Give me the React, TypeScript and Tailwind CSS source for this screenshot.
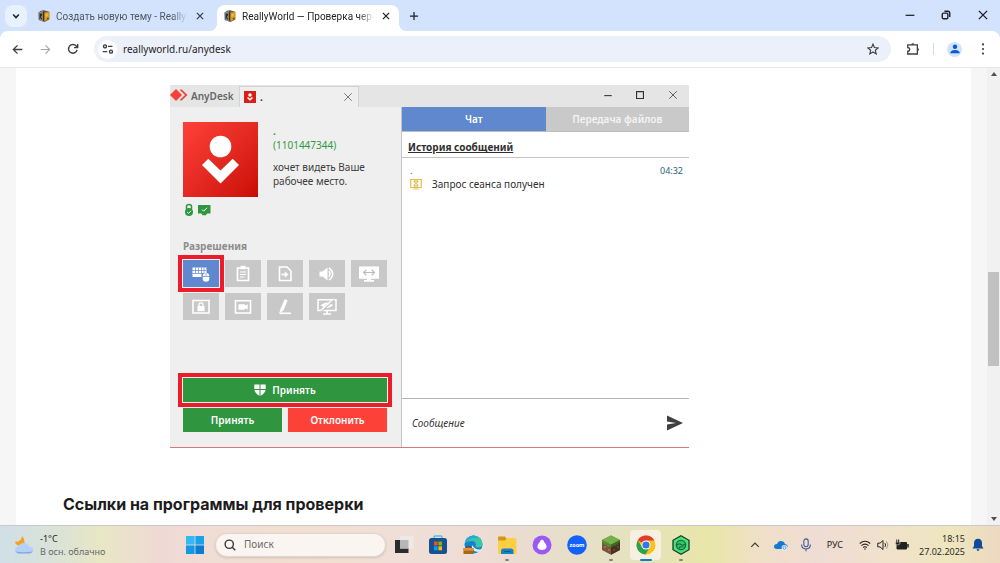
import React from "react";
import type { ReactNode, SVGProps } from "react";

type IconProps = SVGProps<SVGSVGElement>;

function Line({ children, ...rest }: IconProps) {
  return (
    <svg viewBox="0 0 16 16" fill="none" stroke="currentColor" strokeWidth="1.5" aria-hidden="true" {...rest}>
      {children}
    </svg>
  );
}

function Favicon() {
  return (
    <svg viewBox="0 0 12 12" className="size-3 shrink-0" aria-hidden="true">
      <path d="M.5 2.500 3 .8 6 .3l5.300 1.500V9.500L6.500 12 .8 10Z" fill="#5a5855" />
      <path d="M.5 2.800 5 1v10.500L.8 10Z" fill="#99958d" />
      <path d="M1.600 3.500H4v2l-1 1 1.200 3H3L2 7.500v2h-.6Z" fill="#2d2b28" />
      <path d="M4.800 1.400 6.400 2v9l-1.600-.4Z" fill="#34312c" />
      <path d="m6.400 2.600 4.800-.6v7l-4.800 2.200Z" fill="#e59a12" />
      <path d="m7.600 4 2-.4v2.200L7.600 7.200Z" fill="#f8bd3c" />
      <path d="m8.800 8.200 1.800-1v1.800l-1.800.8Z" fill="#6b4a10" />
    </svg>
  );
}

function CloseGlyph({ className }: { className: string }) {
  return (
    <Line className={className}>
      <path d="m3 3 10 10M13 3 3 13" />
    </Line>
  );
}

function TabStrip() {
  return (
    <header className="flex h-[31px] shrink-0 items-end bg-[#d3e3fd] text-[#1f1f1f]">
      <button aria-label="Поиск вкладок" className="mb-1 ml-[5px] flex size-[22px] items-center justify-center rounded-lg bg-[#e9f1fe]">
        <Line className="size-2.5" strokeWidth="2.4"><path d="m3.500 5.500 4.500 5 4.500-5" /></Line>
      </button>
      <div className="ml-[11px] flex h-[26px] w-[166px] items-center pb-1 font-['Roboto',sans-serif] text-[10px] text-[#50575f]">
        <Favicon />
        <a href="#new" className="ml-1.5 w-[132px] whitespace-nowrap [mask-image:linear-gradient(90deg,#000_88%,transparent)]">
          Создать новую тему - ReallyW
        </a>
        <button aria-label="Закрыть вкладку" className="ml-[7px] shrink-0 text-[#3c4043]"><CloseGlyph className="size-2.5 stroke-2" /></button>
      </div>
      <div className="relative ml-[13px] flex h-[26px] w-[182px] items-center rounded-t-lg bg-white pb-1 pl-[7px] font-['Roboto',sans-serif] text-[10px] before:absolute before:bottom-0 before:-left-2 before:size-2 before:bg-[radial-gradient(circle_at_0_0,transparent_8px,#fff_8px)] after:absolute after:-right-2 after:bottom-0 after:size-2 after:bg-[radial-gradient(circle_at_100%_0,transparent_8px,#fff_8px)]">
        <Favicon />
        <a href="#check" className="ml-1.5 w-[132px] whitespace-nowrap [mask-image:linear-gradient(90deg,#000_88%,transparent)]">
          ReallyWorld — Проверка чере
        </a>
        <button aria-label="Закрыть вкладку" className="ml-[7px] shrink-0"><CloseGlyph className="size-2.5 stroke-2" /></button>
      </div>
      <button aria-label="Новая вкладка" className="mb-2.5 ml-2.5">
        <Line className="size-2.5" strokeWidth="2"><path d="M8 1.500v13M1.500 8h13" /></Line>
      </button>
      <div className="mr-[11px] mb-2.5 ml-auto flex items-center gap-[26px]">
        <button aria-label="Свернуть"><Line className="size-2.5"><path d="M1 8.500h14" strokeWidth="2" /></Line></button>
        <button aria-label="Восстановить">
          <Line className="size-2.5" strokeWidth="2.200"><rect x="2" y="5" width="9" height="9" rx="2" /><path d="M5.500 2H11q3 0 3 3v6" /></Line>
        </button>
        <button aria-label="Закрыть"><Line className="size-3" strokeWidth="1.800"><path d="m2.500 2.500 11 11M13.500 2.500l-11 11" /></Line></button>
      </div>
    </header>
  );
}

function AddressBar() {
  return (
    <div className="shrink-0 bg-[#d3e3fd]">
      <nav className="flex h-[37px] items-center rounded-t-lg border-b border-[#e6e6e8] bg-white pr-[11px] pl-3 text-[#3c4043]">
        <button aria-label="Назад"><Line className="size-[11px]"><path d="M15 8H2M8 2 2 8l6 6" strokeWidth="1.900" /></Line></button>
        <button aria-label="Вперёд" className="ml-[17px] text-[#a5a7aa]"><Line className="size-[11px]"><path d="M1 8h13M8 2l6 6-6 6" strokeWidth="1.700" /></Line></button>
        <button aria-label="Обновить" className="ml-4">
          <Line className="size-3" strokeWidth="1.900"><path d="M13.500 9.200A5.800 5.800 0 1 1 12.300 4L14 5.700" /><path d="M14.200 1.400v4.800H9.400" /></Line>
        </button>
        <div className="ml-[15px] flex h-[26px] flex-1 items-center rounded-full bg-[#ebf0fa] pr-3 pl-1">
          <button aria-label="Сведения о сайте" className="flex size-[19px] items-center justify-center rounded-full bg-white">
            <Line className="size-3" strokeWidth="1.800"><circle cx="4" cy="4.500" r="2" /><path d="M8 4.500h6M1 11.500h6" /><circle cx="12" cy="11.500" r="2" /></Line>
          </button>
          <input aria-label="Адресная строка" defaultValue="reallyworld.ru/anydesk" className="ml-1.5 min-w-0 flex-1 bg-transparent text-[10px] text-[#1f2328] outline-none" />
          <button aria-label="Добавить в закладки">
            <Line className="size-3" strokeWidth="1.500"><path d="m8 1.500 1.900 4.600 5 .4-3.800 3.200 1.200 4.800L8 11.900l-4.300 2.600 1.200-4.800L1.100 6.500l5-.4Z" /></Line>
          </button>
        </div>
        <button aria-label="Расширения" className="ml-[15px]">
          <Line className="size-3.5" strokeWidth="1.500"><path d="M2 3.200h11v10.500H2V10.500q2.200 0 2.200-2T2 6.500Z" /><path d="M6 3a1.700 1.700 0 0 1 3.400 0ZM13.200 7a1.600 1.600 0 0 1 0 3.200Z" fill="currentColor" stroke="none" /></Line>
        </button>
        <span className="ml-[13px] h-3 w-px bg-[#c9dcfb]" />
        <button aria-label="Профиль" className="ml-[13px] flex size-[15px] items-center justify-center rounded-full bg-[#d3e3fd]">
          <svg viewBox="0 0 10 10" className="size-2.5 fill-[#0b57d0]" aria-hidden="true"><circle cx="5" cy="2.800" r="2.200" /><path d="M.3 9.300V8.200Q1.500 6 5 6t4.700 2.200v1.100Z" /></svg>
        </button>
        <button aria-label="Меню" className="ml-[15px]">
          <svg viewBox="0 0 12 12" className="size-3 fill-current" aria-hidden="true"><circle cx="6" cy="1.400" r="1.100" /><circle cx="6" cy="6" r="1.100" /><circle cx="6" cy="10.600" r="1.100" /></svg>
        </button>
      </nav>
    </div>
  );
}

function PersonMark({ className }: { className: string }) {
  return (
    <svg viewBox="0 0 75 75" className={className} aria-hidden="true">
      <circle cx="37.500" cy="24.500" r="10.800" fill="#fff" />
      <path d="m19 43 6.300-6.200L37.500 48.500l12.200-11.700L56 43 37.500 61.500Z" fill="#fff" />
    </svg>
  );
}

const permissions: { label: string; active?: boolean; icon: ReactNode }[] = [
  {
    label: "Клавиатура и мышь",
    active: true,
    icon: (
      <>
        <path d="M.5 2.500h14v5.500H9.500v4H.5Z" fill="#fff" />
        <path d="M.5 5.500h14M.5 8.500h9M3.500 2.500v6M6.500 2.500v6M9.500 2.500v6M12 2.500v5.500" stroke="#6088cf" strokeWidth=".7" />
        <path d="M10.700 11.700h6.600v2q0 3-3.300 3t-3.300-3ZM10.700 11q.2-2.800 3-3V11Zm3.600 0V8q2.800.2 3 3Z" fill="#fff" />
      </>
    ),
  },
  {
    label: "Буфер обмена",
    icon: <><path d="M3.500 3h11v12.500h-11Z" strokeWidth="1.700" /><path d="M6.500.8h5v3.500h-5Z" fill="#fff" stroke="none" /><path d="M6 7h6M6 9.500h6M6 12h4.500" strokeWidth="1.200" /></>,
  },
  {
    label: "Передача файлов",
    icon: <><path d="M3.500 2h7.500l4 4v9.500h-11.500Z" strokeWidth="1.600" /><path d="M5.500 9.500h4.500" strokeWidth="1.800" /><path d="m8.800 6.300 3.700 3.200-3.700 3.200Z" fill="#fff" stroke="none" /></>,
  },
  {
    label: "Звук",
    icon: <><path d="M1.500 6.500h3L9.500 2.500v13l-5-4h-3Z" fill="#fff" stroke="none" /><path d="M11 6.200q1.900 2.800 0 5.600" strokeWidth="1.500" /><path d="M11 2.800q7.500 6.200 0 12.400" strokeWidth="1.500" /></>,
  },
  {
    label: "Размер экрана",
    icon: <><path d="M-1 1.500h20v12.200h-8v1.300h3v1.700H4V15h3v-1.300h-8Z" fill="#fff" stroke="none" /><path d="M3.800 7.500h10.400M6.300 4.800 3.500 7.500l2.800 2.700M11.700 4.800l2.800 2.700-2.800 2.700" stroke="#bdbdbd" strokeWidth="1.200" /></>,
  },
  {
    label: "Блокировка",
    icon: <><path d="M1 2.500h16v12.500H1Z" strokeWidth="1.600" /><path d="M5.500 8h7v5.200h-7Z" fill="#fff" stroke="none" /><path d="M7 8V6.600q0-1.800 2-1.800t2 1.800V8" strokeWidth="1.300" /></>,
  },
  {
    label: "Запись",
    icon: <><path d="M1.500 2.800h15v12.200h-15Z" strokeWidth="1.600" /><path d="M4.500 6.200h6.300v1.600l2.900-1.600v5.600l-2.900-1.600v1.600H4.500Z" fill="#fff" stroke="none" /></>,
  },
  {
    label: "Рисование",
    icon: <><path d="M8.600 1.300 11.700 2.300 7.500 12.500 3.300 15.300l1.200-4.500Z" fill="#fff" stroke="none" /><path d="M3.500 15.300h11.500" strokeWidth="1.600" /></>,
  },
  {
    label: "Приватный режим",
    icon: <><path d="M0 1.800h18v10.800H0Z" strokeWidth="1.500" /><path d="M5 16h8M9 13v3" strokeWidth="1.700" /><path d="M2.500 7.300Q9 1.500 15.500 7.300 9 12.800 2.500 7.300Z" fill="#fff" stroke="none" /><circle cx="9" cy="7.300" r="1.600" fill="#c8c8c8" stroke="none" /><path d="m3 13.500 13-12" stroke="#c8c8c8" strokeWidth="2" /><path d="m2.500 12.800 13-12" strokeWidth="1.300" /></>,
  },
];

function SessionPanel() {
  return (
    <section className="flex w-[232px] shrink-0 flex-col border-r border-[#c4c4c4] bg-[#efefef] pt-[15px] pr-3.5 pb-[15px] pl-[13px]">
      <div className="flex gap-[15px]">
        <PersonMark className="size-[75px] shrink-0 bg-linear-to-br from-[#ff4038] to-[#c90a03]" />
        <div className="pt-0.5 text-[10px] leading-[14px] text-[#3c3c3c]">
          <p className="text-[#2f9a42]"><b>.</b><br />(1101447344)</p>
          <p className="mt-2 whitespace-nowrap">хочет видеть Ваше<br />рабочее место.</p>
        </div>
      </div>
      <div className="mt-1.5 flex gap-[3px]">
        <svg viewBox="0 0 12 14" className="h-3.5 w-3" aria-hidden="true">
          <path d="M3.500 6V3.500q0-2 2.500-2t2.500 2V6" fill="none" stroke="#2f963f" strokeWidth="1.500" /><circle cx="6" cy="9" r="4" fill="#2f963f" /><path d="m4.200 9 1.400 1.400L8 7.800" fill="none" stroke="#fff" />
        </svg>
        <svg viewBox="0 0 14 14" className="size-3.5" aria-hidden="true">
          <path d="M0 2h12.500v8.500H9l-1 1.700H4.500l-1-1.700H0Z" fill="#2f963f" /><path d="m4 6.500 1.700 1.700L9 4.800" fill="none" stroke="#fff" />
        </svg>
      </div>
      <h2 className="mt-[22px] text-[10px] leading-[15px] font-bold text-[#8c8c8c]">Разрешения</h2>
      <div className="mt-1.5 flex flex-wrap gap-1.5">
        {permissions.map((p) => (
          <button
            key={p.label}
            aria-label={p.label}
            className={
              p.active
                ? "relative flex h-[27px] w-9 items-center justify-center bg-[#6088cf] outline-4 outline-offset-1 outline-[#ec1c2b]"
                : "flex h-[27px] w-9 items-center justify-center bg-[#c8c8c8]"
            }
          >
            <svg viewBox="0 0 18 18" className="size-[18px] overflow-visible" fill="none" stroke={p.active ? "none" : "#fff"} aria-hidden="true">{p.icon}</svg>
          </button>
        ))}
      </div>
      <div className="mt-auto grid grid-cols-2 gap-1.5 text-[10px] font-semibold text-white">
        <button className="z-10 col-span-2 flex h-6 items-center justify-center gap-1.5 bg-[#2f963f] outline-4 outline-offset-1 outline-[#ec1c2b]">
          <svg viewBox="0 0 12 12" className="size-3" aria-hidden="true">
            <path d="M.3.500h11.400v5Q11 9.500 6 12 1 9.500.3 5.500Z" fill="#fff" /><path d="M6 0v12M0 5.500h12" stroke="#2f963f" />
          </svg>
          Принять
        </button>
        <button className="h-6 bg-[#2f963f]">Принять</button>
        <button className="h-6 bg-[#fc4138]">Отклонить</button>
      </div>
    </section>
  );
}

function ChatPanel() {
  return (
    <section className="flex min-w-0 flex-1 flex-col bg-white text-[10px] text-[#303030]">
      <div className="grid h-[25px] shrink-0 grid-cols-2 border-b border-[#bdbdbd] font-semibold">
        <button className="bg-[#6088cf] text-white">Чат</button>
        <button className="bg-[#c9c9c9] text-[#f4f4f4]">Передача файлов</button>
      </div>
      <h2 className="flex h-[26px] items-center border-b border-[#c4c4c4] pt-1.5 pl-1.5 font-bold underline">История сообщений</h2>
      <div className="flex flex-1 flex-col pt-[7px] pr-1.5 pl-2">
        <div className="flex justify-between text-[9px] leading-3 text-[#2b6480]"><span>.</span><time>04:32</time></div>
        <div className="flex items-center leading-[14px]">
          <svg viewBox="0 0 12 12" className="mr-2.5 size-3" aria-hidden="true">
            <path d="M.7 1.500h10.600v8H.7ZM3.500 11h5" fill="none" stroke="#e7bd4c" strokeWidth="1.200" /><path d="M4 3h4L6.600 5.400 8 8H4l1.400-2.600Z" fill="none" stroke="#dba728" />
          </svg>
          Запрос сеанса получен
        </div>
      </div>
      <div className="flex h-[49px] shrink-0 items-center border-t border-[#b5b5b5] pr-1.5 pl-2.5">
        <input aria-label="Сообщение" placeholder="Сообщение" className="min-w-0 flex-1 italic outline-none placeholder:text-[#333]" />
        <button aria-label="Отправить">
          <svg viewBox="0 0 16 16" className="size-4 fill-[#404040]" aria-hidden="true"><path d="m0 .5 16 7.500-16 7.500v-6L9 8 0 6.500Z" /></svg>
        </button>
      </div>
    </section>
  );
}

function AnyDeskWindow() {
  return (
    <figure className="mx-auto flex h-[363px] w-full max-w-[519px] flex-col">
      <div className="flex h-[22px] shrink-0 items-end bg-[#e5e5e5] text-[#555]">
        <svg viewBox="0 0 18 12" className="mb-1.5 h-3 w-[18px]" aria-hidden="true">
          <path d="m6 0 6 6-6 6-6-6Z" fill="#f4423a" /><path d="M9.500.8 11.700.5 17.500 6l-5.800 5.500-2.200-.3L15 6Z" fill="#f4423a" />
        </svg>
        <span className="mb-[3px] w-[51px] pl-[3px] text-[10px] leading-4 font-semibold whitespace-nowrap text-[#666]">AnyDesk</span>
        <div className="flex h-[21px] w-[120px] items-center border-x border-t border-[#d2d2d2] bg-[#efefef] px-1 text-[10px]">
          <PersonMark className="size-3 bg-[#d91f19]" />
          <b className="ml-1 text-[#333]">.</b>
          <button aria-label="Закрыть сеанс" className="ml-auto"><CloseGlyph className="size-3 stroke-1" /></button>
        </div>
        <div className="mr-2.5 mb-1.5 ml-auto flex items-center gap-[22px] text-[#333]">
          <button aria-label="Свернуть AnyDesk"><Line className="size-2.5"><path d="M2 9h12" strokeWidth="1.700" /></Line></button>
          <button aria-label="Развернуть AnyDesk"><Line className="size-2.5"><path d="M2.500 2.500h11v11h-11Z" strokeWidth="1.800" /></Line></button>
          <button aria-label="Закрыть AnyDesk"><CloseGlyph className="size-3 stroke-1" /></button>
        </div>
      </div>
      <div className="flex min-h-0 flex-1">
        <SessionPanel />
        <ChatPanel />
      </div>
      <hr className="h-px shrink-0 border-0 bg-[#d9787c]" />
    </figure>
  );
}

const apps: { name: string; running?: boolean; current?: boolean; icon: ReactNode }[] = [
  { name: "Представление задач", icon: <><path d="M1 5h13.500v13H1Z" fill="#292b2c" /><path d="M6 1h13.500v12.500H6Z" fill="#eceae9" /><path d="M6 5h8.500v8.500H6Z" fill="#b8b7b6" /></> },
  { name: "Microsoft Store", icon: <><path d="M6 4V2q0-1 1-1h6q1 0 1 1v2" fill="none" stroke="#4cc0ee" strokeWidth="1.500" /><rect x="1" y="3" width="18" height="16" rx="2.500" fill="#17518f" /><path d="M6 6.500h3.600v4H6Z" fill="#f25022" /><path d="M10.400 6.500H14v4h-3.600Z" fill="#7fba00" /><path d="M6 11.300h3.600v4H6Z" fill="#00a4ef" /><path d="M10.400 11.300H14v4h-3.600Z" fill="#ffb900" /></> },
  { name: "Edge", icon: <><circle cx="10.500" cy="9.500" r="9" fill="#1a7fd0" /><path d="M2 8Q3 1 10.500.5 19 1 19.500 9q-.5 4-5 3.500-3-.5-1.500-3Q12.500 6 9 6 4 6 2 8Z" fill="#38c7a8" /><path d="M2 8Q3 1 10.500.5 14 1 16 3 7 2 2 8Z" fill="#27a6df" /><path d="M9 10q-1 6 6 7 3-.5 4-3-6 2-10-4Z" fill="#dceefa" /><path d="M.5 13h10v6H.5Z" fill="#a8651b" /><path d="M.5 13h10v2.700H.5Z" fill="#dc9532" /><path d="M3.500 13v-1.500h4V13" fill="none" stroke="#7c450d" /></> },
  { name: "Проводник", running: true, icon: <><path d="M1 2.500q0-1 1-1h6l1.500 2v4H1Z" fill="#d4950f" /><path d="M1 5.500h7l2-2.500h8.500q1 0 1 1v14q0 1-1 1H2q-1 0-1-1Z" fill="#ffce45" /><path d="M4 19v-3q0-2.500 2.500-2.500H14q2.500 0 2.500 2.500v3Z" fill="#1682c5" /><path d="M7 16.500h6.500" stroke="#0a5795" /></> },
  { name: "Алиса", icon: <><circle cx="10" cy="10" r="9.500" fill="#9a59f2" /><path d="M10 4.500q1.300 0 2.400 2.800 2.800 3 2 5.600Q13 15 10 15t-4.400-2.100q-.8-2.600 2-5.600Q8.700 4.500 10 4.500Z" fill="#fff" /></> },
  { name: "Zoom", icon: <><circle cx="10" cy="10" r="9.800" fill="#1261fa" /><text x="10" y="12" textAnchor="middle" fontSize="5.500" fontWeight="700" fill="#fff">zoom</text></> },
  { name: "Minecraft", running: true, icon: <><path d="m10 .5 9 4.500v10l-9 4.800L1 15V5Z" fill="#7a553b" /><path d="m10 9.500 9-4.500v10l-9 4.800Z" fill="#4a3222" /><path d="m10 .5 9 4.500-9 4.700L1 5Z" fill="#74b347" /><path d="m1 5 9 4.700V12l-2-1v1.500L5.500 11.200V10L3 9.300 1 7.500Z" fill="#568b31" /><path d="M19 5v2.500l-2 1v1.500l-2-.5v1.500l-2-.5-3 2V9.700Z" fill="#3c6c24" /><path d="M3 11h2v2H3Zm4 3h2v2H7Z" fill="#96755a" /><path d="M12 14h2v2h-2Zm4-3h2v2h-2Z" fill="#634732" /></> },
  { name: "Chrome", running: true, current: true, icon: <><circle cx="10" cy="10" r="9.500" fill="#fbc116" /><path d="M10 10 1.800 5.200A9.500 9.500 0 0 1 18.300 5.500H10Z" fill="#e33b2e" /><path d="M1.800 5.200A9.500 9.500 0 0 0 9.500 19.500l4.200-7.300L10 10l-4 2Z" fill="#2ba24c" /><circle cx="10" cy="10" r="4.600" fill="#fff" /><circle cx="10" cy="10" r="3.600" fill="#3478e5" /></> },
  { name: "Лаунчер", running: true, icon: <><path d="m10 .8 8 4.500v9.400l-8 4.500-8-4.500V5.300Z" fill="#4ce07a" stroke="#1b3a29" strokeWidth="1.300" /><circle cx="10" cy="10" r="4.700" fill="#2fca6b" stroke="#1b6a41" strokeWidth="1.200" /><path d="M5.500 10.500q2.500-2.500 4.500-1t4.500-.5M8 13.500q0-2.500 4.500-1.500" fill="none" stroke="#1b6a41" strokeWidth="1.100" /></> },
];

function Taskbar() {
  return (
    <footer className="flex h-[38px] shrink-0 items-center border-t border-[#c9c9cb] bg-[linear-gradient(90deg,#d0dfe7_0%,#dce3d6_6%,#e8e7c5_10%,#efd9d4_16%,#f0ded5_22%,#f2dfd0_30%,#f0dfd7_40%,#ecdcd3_50%,#e6dfc8_58%,#e5e3bd_64%,#e8e6a8_71%,#f0dfc8_76%,#efdcd4_82%,#f0e2cb_89%,#eee6be_95%,#edd9c0_100%)] text-[#37393b]">
      <button className="ml-3.5 flex w-[171px] items-center gap-1.5 text-left text-[9px] leading-[13px]">
        <svg viewBox="0 0 20 20" className="size-5" aria-hidden="true">
          <path d="M8.500 1Q6 8 .8 6.500q1 5 7.200 4 5-2 .5-9.500Z" fill="#f5a025" /><path d="M5 18.500q-4.200 0-4.200-3.500 0-3 3.500-3.300Q6 8 10 8t5.500 4q4 0 4 3.300 0 3.200-4 3.200Z" fill="#b4d1f7" /><path d="M2 16.500q7 1.500 16.500 0-1 2-3.500 2H5q-2 0-3-2Z" fill="#7fa9e8" />
        </svg>
        <span><span className="block text-[#222]">-1°C</span><span className="block whitespace-nowrap text-[#66696a]">В осн. облачно</span></span>
      </button>
      <button aria-label="Пуск" className="ml-px">
        <svg viewBox="0 0 18 18" className="size-[18px]" aria-hidden="true"><path d="M0 0h8.600v8.600H0Z" fill="#35b9f2" /><path d="M9.400 0H18v8.600H9.400Z" fill="#1ba3ea" /><path d="M0 9.400h8.600V18H0Z" fill="#1399e4" /><path d="M9.400 9.400H18V18H9.400Z" fill="#077dd4" /></svg>
      </button>
      <label className="ml-[11px] flex h-6 w-[171px] items-center gap-2 rounded-full border border-[#e0d6cf] bg-[#fbf5f2] px-2 shadow-sm">
        <Line className="size-3 shrink-0" strokeWidth="1.900"><circle cx="7" cy="7" r="5.500" /><path d="m11 11 4 4" /></Line>
        <input aria-label="Поиск" placeholder="Поиск" className="min-w-0 flex-1 bg-transparent text-[10px] outline-none placeholder:text-[#6c6a69]" />
      </label>
      <div className="ml-[3px] flex w-[306px] items-center justify-between">
        {apps.map((a) => (
          <button
            key={a.name}
            aria-label={a.name}
            className={a.current ? "relative -mx-px flex h-[30px] w-[31px] items-center justify-center rounded bg-[#f6efe2]" : "relative flex h-[30px] w-[29px] items-center justify-center"}
          >
            <svg viewBox="0 0 20 20" className="size-5" aria-hidden="true">{a.icon}</svg>
            {a.running && <span className={a.current ? "absolute -bottom-px h-0.5 w-3 rounded-full bg-[#1779ca]" : "absolute -bottom-px h-0.5 w-1 rounded-full bg-[#85827c]"} />}
          </button>
        ))}
      </div>
      <div className="mr-4 ml-auto flex items-center">
        <button aria-label="Скрытые значки"><Line className="size-2.5"><path d="m2 11 6-6 6 6" strokeWidth="1.900" /></Line></button>
        <button aria-label="OneDrive" className="ml-3.5">
          <svg viewBox="0 0 14 12" className="h-3 w-3.5" aria-hidden="true"><path d="M3 10Q0 10 0 7.500T3 5q1-3 4-3t4 3q3 .5 2.500 3T11 10Z" fill="#1678d1" /><circle cx="10.500" cy="8.800" r="2.900" fill="#eaf3fb" /><circle cx="10.500" cy="8.800" r="1.500" fill="none" stroke="#4e98dc" /></svg>
        </button>
        <button aria-label="Микрофон" className="ml-[11px] text-[#395a95]">
          <Line className="size-3.5" strokeWidth="1.200"><rect x="5.500" y="1" width="5" height="9" rx="2.500" /><path d="M3 7.500q0 5 5 5t5-5M8 12.500V15" /></Line>
        </button>
        <span className="ml-3.5 text-[9px] text-[#222]">РУС</span>
        <button aria-label="Сеть, звук и батарея" className="ml-4 flex items-center gap-1.5 text-[#222]">
          <Line className="size-3" strokeWidth="1.400"><path d="M1 6q7-6 14 0M3.200 8.800q4.800-4 9.600 0M5.500 11.300q2.500-2 5 0" /><circle cx="8" cy="13.300" r="1" fill="currentColor" stroke="none" /></Line>
          <Line className="size-3" strokeWidth="1.300"><path d="M1 5.500h3L8 2v12l-4-3.500H1Z" /><path d="M10.500 5.500q2 2.500 0 5" /><path d="M12.500 3q4 5 0 10" opacity=".4" /></Line>
          <svg viewBox="0 0 14 12" className="h-3 w-3.5" aria-hidden="true"><path d="M2 3.500h9.500v6.500H2Z" fill="#222" stroke="#222" /><path d="M13 5v3.500" stroke="#222" strokeWidth="1.500" /><path d="M.5 3h4.500v2q-2.300 2-4.500 0Z" fill="#222" stroke="#f0e2cb" strokeWidth=".5" /><path d="M1.800.5V3M3.700.5V3" stroke="#222" /></svg>
        </button>
        <time className="ml-2.5 text-right text-[9px] leading-[13px] text-[#2b2b2b]">18:15<br />27.02.2025</time>
        <button aria-label="Уведомления" className="ml-[7px]">
          <svg viewBox="0 0 12 14" className="h-3.5 w-3 fill-[#114b9e]" aria-hidden="true"><path d="M6 .8q4 .2 4 4.200v3l1.500 2.500H.5L2 8V5Q2 1 6 .8ZM4.500 11.300h3Q7.200 13 6 13t-1.500-1.700Z" /></svg>
        </button>
      </div>
    </footer>
  );
}

export default function App() {
  return (
    <div className="flex h-screen flex-col overflow-hidden font-['Noto_Sans',sans-serif]">
      <TabStrip />
      <AddressBar />
      <div className="flex min-h-0 flex-1">
        <main className="min-w-0 flex-1 overflow-hidden bg-[#f6f6f6] px-4">
          <article className="h-full bg-white px-[47px] pt-[17px]">
            <div className="max-w-[733px]">
              <AnyDeskWindow />
              <h1 className="mt-11 font-['Inter',sans-serif] text-[16px] leading-6 font-bold text-[#1c1c1c]">Ссылки на программы для проверки</h1>
            </div>
          </article>
        </main>
        <div aria-hidden="true" className="flex w-[13px] flex-col items-center bg-[#f1f1f1] py-1">
          <svg viewBox="0 0 6 4" className="h-1 w-1.5 fill-[#505050]"><path d="M0 4 3 0l3 4Z" /></svg>
          <span className="mt-[196px] h-[94px] w-[11px] bg-[#c1c1c1]" />
          <svg viewBox="0 0 6 4" className="mt-auto h-1 w-1.5 fill-[#505050]"><path d="m0 0 3 4 3-4Z" /></svg>
        </div>
      </div>
      <Taskbar />
    </div>
  );
}
